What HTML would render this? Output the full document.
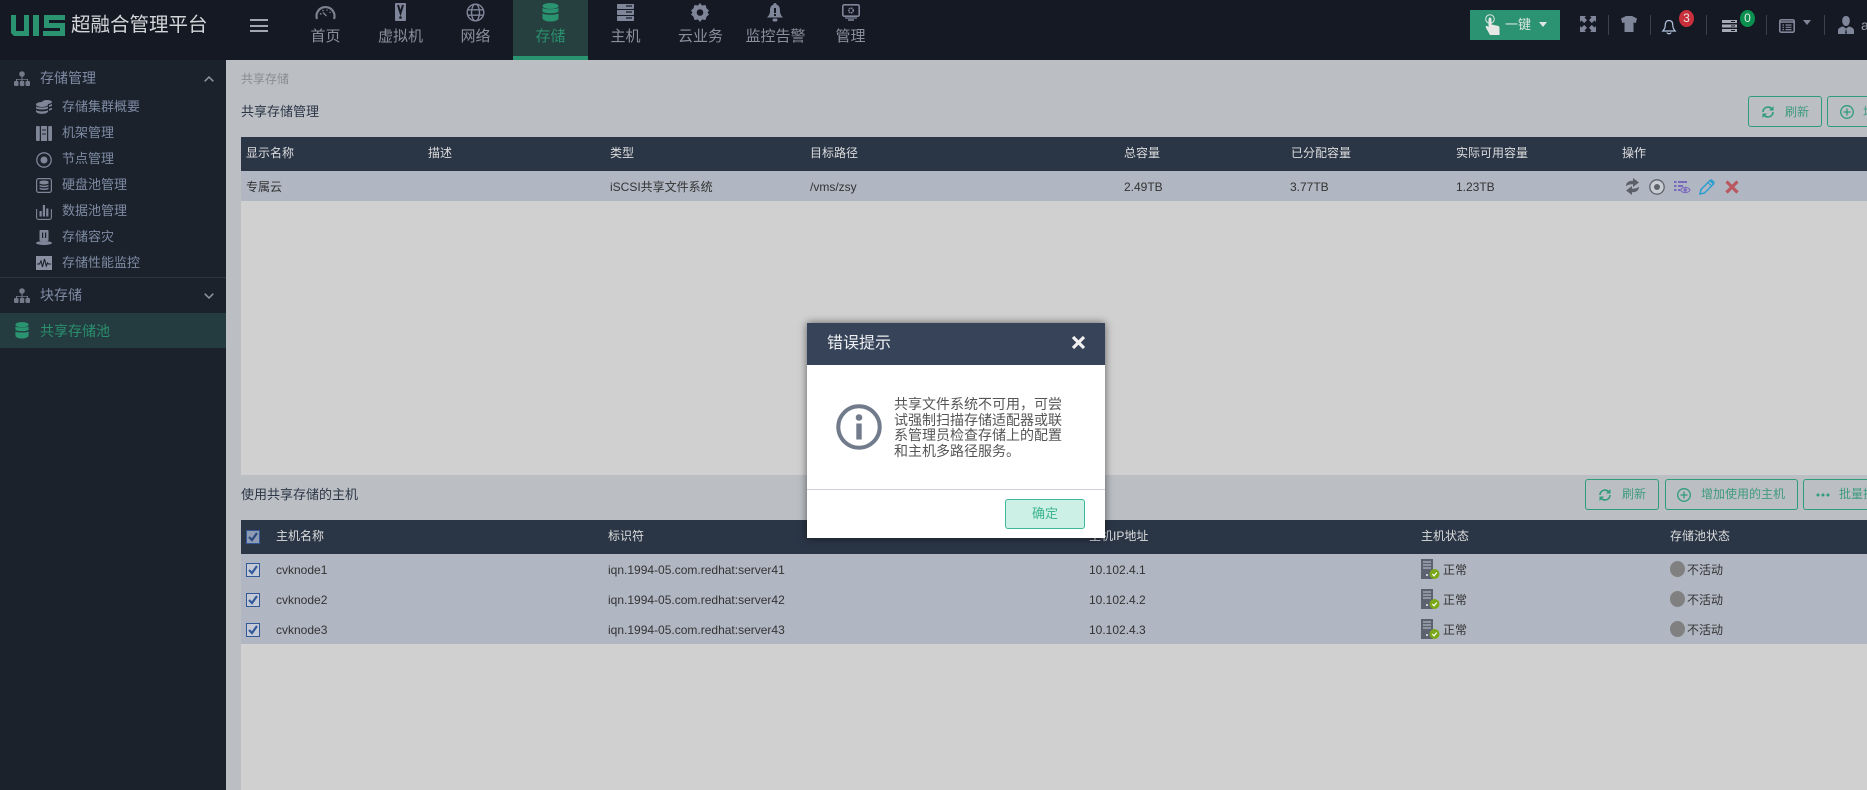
<!DOCTYPE html>
<html lang="zh">
<head>
<meta charset="utf-8">
<title>UIS 超融合管理平台</title>
<style>
html,body{margin:0;padding:0;width:1867px;height:790px;overflow:hidden;background:#bbbec3}
body{position:relative;font-family:"Liberation Sans","Noto Sans CJK SC",sans-serif;font-size:12px;color:#333}
.b{position:absolute}
.t{position:absolute;white-space:nowrap;height:20px;line-height:20px}
svg{position:absolute;overflow:visible}
.nav{position:absolute;top:27px;width:75px;height:20px;line-height:20px;text-align:center;font-size:15px;color:#8a8f9e;white-space:nowrap}
.sub{font-size:13px;color:#7e8ba3;left:62px}
.top{font-size:14px;color:#7e8ba3;left:40px}
.th{color:#ddd;font-size:12px}
.td{color:#333;font-size:12px}
.btn{position:absolute;box-sizing:border-box;border:1px solid #2f9c7a;border-radius:3px;height:31px}
.bt{font-size:12px;color:#3f9b7d}
.cb{position:absolute;box-sizing:border-box;width:14px;height:14px;border:1px solid #33589a;background:#c3cad6}
.sep{position:absolute;top:15px;width:1px;height:20px;background:#3c4049}
.badge{position:absolute;width:15px;height:17px;border-radius:50%;color:#e8e8e8;font-size:12px;line-height:17px;text-align:center}
</style>
</head>
<body>
<!-- header -->
<div class="b" style="left:0;top:0;width:1867px;height:60px;background:#151923"></div>

<!-- logo -->
<svg style="left:11px;top:15px" width="56" height="22" viewBox="0 0 56 22">
<path d="M0 0h5v16h8V0h5v21H3l-3-3z" fill="#2a9370"/>
<path d="M22 0h6v21h-6z" fill="#2a9370"/>
<path d="M33 0h21v5H38v3h16v13H32v-5h17v-3H33z" fill="#2a9370"/>
</svg>
<div class="t" style="left:71px;top:15px;font-size:19.500px;color:#d4d6da">超融合管理平台</div>

<!-- hamburger -->
<div class="b" style="left:250px;top:19px;width:18px;height:2px;background:#a2a6b3"></div>
<div class="b" style="left:250px;top:25px;width:18px;height:2px;background:#a2a6b3"></div>
<div class="b" style="left:250px;top:30px;width:18px;height:2px;background:#a2a6b3"></div>

<!-- active nav -->
<div class="b" style="left:513px;top:0;width:75px;height:56px;background:#25403f"></div>
<div class="b" style="left:513px;top:56px;width:75px;height:4px;background:#2a9370"></div>
<svg style="left:544px;top:60px" width="13" height="6"><path d="M0 0h13L6.500 6z" fill="#2a9370"/></svg>

<!-- nav icons -->
<svg style="left:315px;top:5px" width="21" height="15" viewBox="0 0 21 15"><path d="M2 14A9 9 0 1 1 19 14" fill="none" stroke="#7d8291" stroke-width="2.200"/><path d="M5 8.500l1.500 .8M7.500 5l1 1M12 4.500v1.200M15.500 7l-1 .8M8 7.500l3.500 3.500" stroke="#7d8291" stroke-width="1.300" fill="none"/></svg>
<svg style="left:395px;top:3px" width="11" height="18" viewBox="0 0 11 18"><rect width="11" height="18" rx="1" fill="#80869a"/><path d="M3 2l2.500 8L8 2" fill="none" stroke="#151923" stroke-width="2"/><circle cx="5.500" cy="14.500" r="1.300" fill="#151923"/></svg>
<svg style="left:466px;top:3px" width="19" height="19" viewBox="0 0 19 19" fill="none" stroke="#80869a" stroke-width="1.400"><circle cx="9.500" cy="9.500" r="8.300"/><ellipse cx="9.500" cy="9.500" rx="4" ry="8.300"/><path d="M1.500 6.800h16M1.500 12.200h16"/></svg>
<svg style="left:542px;top:3px" width="17" height="19" viewBox="0 0 17 19" fill="#2a9370"><ellipse cx="8.500" cy="3" rx="8" ry="3"/><path d="M.5 4.800C2 6.800 15 6.800 16.500 4.800V8.500C15 10.800 2 10.800 .5 8.500z"/><path d="M.5 10.300C2 12.300 15 12.300 16.500 10.300V15.500C15 19.500 2 19.500 .5 15.500z"/></svg>
<svg style="left:617px;top:4px" width="17" height="17" viewBox="0 0 17 17" fill="#80869a"><rect width="17" height="5" rx=".7"/><rect y="6" width="17" height="5" rx=".7"/><rect y="12" width="17" height="5" rx=".7"/><path d="M9 2h6M9 8h6M9 14h6" stroke="#151923" stroke-width="1.200"/></svg>
<svg style="left:691px;top:3px" width="18" height="19" viewBox="0 0 18 19"><path d="M9 0l2 2.500 3.500-.5 1 3.200L18 7.500 16.500 9.500 18 11.500l-2.500 2.300-1 3.200-3.500-.5L9 19l-2-2.500-3.500.5-1-3.200L0 11.500 1.500 9.500 0 7.500l2.500-2.300 1-3.200 3.500.5z" fill="#80869a"/><circle cx="9" cy="9.500" r="3.300" fill="#151923"/></svg>
<svg style="left:767px;top:3px" width="16" height="19" viewBox="0 0 16 19" fill="#80869a"><path d="M8 0c1 0 1.700.7 1.700 1.700C12.500 2.500 13 5 13 8c0 3 1.500 5 3 6.500H0C1.500 13 3 11 3 8c0-3 .5-5.500 3.300-6.300C6.300.7 7 0 8 0z"/><rect x="5.500" y="15.500" width="5" height="3" rx="1.500"/><rect x="7" y="5" width="2" height="5" fill="#151923"/><rect x="7" y="11" width="2" height="2" fill="#151923"/></svg>
<svg style="left:842px;top:4px" width="18" height="17" viewBox="0 0 18 17"><rect x=".8" y=".8" width="16.400" height="11.400" rx="1.500" fill="none" stroke="#80869a" stroke-width="1.600"/><path d="M3 14h12" stroke="#80869a" stroke-width="1.200"/><path d="M6 16h6" stroke="#80869a" stroke-width="1.500"/><circle cx="9" cy="6.500" r="2.300" fill="none" stroke="#80869a" stroke-width="1.600" stroke-dasharray="1.500 .6"/></svg>

<div class="nav" style="left:288px">首页</div>
<div class="nav" style="left:363px">虚拟机</div>
<div class="nav" style="left:438px">网络</div>
<div class="nav" style="left:513px;color:#2a8f6d">存储</div>
<div class="nav" style="left:588px">主机</div>
<div class="nav" style="left:663px">云业务</div>
<div class="nav" style="left:738px">监控告警</div>
<div class="nav" style="left:813px">管理</div>

<!-- header right -->
<div class="b" style="left:1470px;top:10px;width:90px;height:30px;background:#2b9371"></div>
<svg style="left:1485px;top:14px" width="15" height="21" viewBox="0 0 15 21"><circle cx="5" cy="5" r="4.300" fill="none" stroke="#dfe6e3" stroke-width="1"/><path d="M3.500 5c0-2 3-2 3 0v5.500l6 1.200c1.500.3 2 1 2 2.300V21H5L.8 13.500c-.5-1.300 1-2.300 2.200-1l.5.700z" fill="#e6e8e6"/></svg>
<div class="t" style="left:1505px;top:15px;font-size:13px;color:#dce6e2">一键</div>
<svg style="left:1539px;top:22px" width="8" height="5"><path d="M0 0h8L4 5z" fill="#dfe6e3"/></svg>

<svg style="left:1580px;top:16px" width="16" height="16" viewBox="0 0 16 16" fill="#80869a"><path d="M0 0h6L4.500 1.500 7 4.200 4.200 7 1.500 4.500 0 6z"/><path d="M16 0v6l-1.500-1.500L11.800 7 9 4.200l2.500-2.700L10 0z"/><path d="M0 16v-6l1.500 1.500L4.200 9 7 11.800l-2.500 2.700L6 16z"/><path d="M16 16h-6l1.500-1.500L9 11.800 11.800 9l2.700 2.500L16 10z"/></svg>
<div class="sep" style="left:1608px"></div>
<svg style="left:1621px;top:16px" width="16" height="16" viewBox="0 0 16 16"><path d="M5 0h6l5 2.500-1.200 4.500-2.300-.5V16h-9V6.500L1.200 7 0 2.500z" fill="#80869a"/></svg>
<div class="sep" style="left:1650px"></div>
<svg style="left:1662px;top:19px" width="14" height="16" viewBox="0 0 14 16"><path d="M7 1.500c3 0 3.800 2.400 3.800 5 0 2.500 1 4 2.400 5.500H.8C2.200 10.500 3.200 9 3.200 6.500c0-2.600.8-5 3.800-5z" fill="none" stroke="#b4c4df" stroke-width="1.200"/><path d="M5 13.500c.5 1.700 3.500 1.700 4 0" fill="none" stroke="#b4c4df" stroke-width="1.200"/></svg>
<div class="badge" style="left:1679px;top:10px;background:#c9303c">3</div>
<div class="sep" style="left:1706px"></div>
<svg style="left:1722px;top:20px" width="15" height="12" viewBox="0 0 15 12"><rect width="15" height="3" fill="#a6aab5"/><rect y="4.500" width="15" height="3" fill="#a6aab5"/><rect y="9" width="15" height="3" fill="#a6aab5"/><path d="M9 1.500h4M9 6h4M9 10.500h4" stroke="#151923" stroke-width="1"/></svg>
<div class="badge" style="left:1740px;top:10px;background:#0a8f4f">0</div>
<div class="sep" style="left:1766px"></div>
<svg style="left:1779px;top:19px" width="16" height="14" viewBox="0 0 16 14"><rect x=".8" y=".8" width="14.400" height="12.400" rx="1.500" fill="none" stroke="#80869a" stroke-width="1.600"/><path d="M.8 3h14.400" stroke="#80869a" stroke-width="1.600"/><path d="M3.500 6h1.500M6.500 6h6M3.500 8.300h1.500M6.500 8.300h6M3.500 10.600h1.500M6.500 10.600h6" stroke="#80869a" stroke-width="1.200"/></svg>
<svg style="left:1803px;top:20px" width="8" height="5"><path d="M0 0h8L4 5z" fill="#80869a"/></svg>
<div class="sep" style="left:1824px"></div>
<svg style="left:1838px;top:16px" width="16" height="18" viewBox="0 0 16 18" fill="#80869a"><path d="M8 0c2.800 0 3.800 2.300 3.800 5 0 2.500-1.500 5-3.800 5S4.200 7.500 4.200 5C4.200 2.300 5.200 0 8 0z"/><path d="M5 10.500l3 2 3-2c3 .7 5 2 5 4V18H0v-3.500c0-2 2-3.300 5-4z"/><path d="M8 12.500l-1 5h2z" fill="#151923"/></svg>
<div class="t" style="left:1861px;top:15px;font-size:14px;color:#9a9ea8">admin</div>

<!-- sidebar -->
<div class="b" style="left:0;top:60px;width:226px;height:730px;background:#1b222c"></div>
<div class="b" style="left:0;top:277px;width:226px;height:1px;background:#2e353f"></div>
<div class="b" style="left:0;top:313px;width:226px;height:35px;background:#243c3f"></div>

<svg style="left:14px;top:71px" width="16" height="15" viewBox="0 0 16 15" fill="#747a8a"><circle cx="8" cy="3" r="2.800"/><path d="M7.500 5h1v3H14v2h-1V8.800H8.500V10h-1V8.800H3V10H2V8h5.500z"/><rect y="10" width="4.500" height="5" rx="1"/><rect x="5.800" y="10" width="4.500" height="5" rx="1"/><rect x="11.500" y="10" width="4.500" height="5" rx="1"/></svg>
<div class="t top" style="top:68px">存储管理</div>
<svg style="left:204px;top:76px" width="10" height="6"><path d="M.7 5.300L5 1l4.300 4.300" fill="none" stroke="#8f96a5" stroke-width="1.500"/></svg>

<svg style="left:36px;top:100px" width="16" height="14" viewBox="0 0 16 14" fill="#7f8698"><ellipse cx="6" cy="4.500" rx="6" ry="2.500"/><path d="M0 6.200C2 8 10 8 12 6.200v2C10 10 2 10 0 8.200zM0 10c2 1.800 10 1.800 12 0v1.700C10 14.500 2 14.500 0 11.700z"/><ellipse cx="11" cy="2" rx="5" ry="2"/><path d="M13 5.300l3-1.300v1.800l-3 1.200zM13 9l3-1.300v1.800l-3 1.200z"/></svg>
<div class="t sub" style="top:97px">存储集群概要</div>
<svg style="left:36px;top:126px" width="16" height="15" viewBox="0 0 16 15" fill="#7f8698"><rect width="3.800" height="15" rx="1"/><rect x="5" width="6" height="15"/><rect x="12.200" width="3.800" height="15" rx="1"/><path d="M6 4h4M6 8h4" stroke="#1b222c" stroke-width="1"/></svg>
<div class="t sub" style="top:123px">机架管理</div>
<svg style="left:36px;top:152px" width="16" height="16" viewBox="0 0 16 16"><circle cx="8" cy="8" r="7.200" fill="none" stroke="#7f8698" stroke-width="1.300"/><circle cx="8" cy="8" r="3.500" fill="#7f8698"/></svg>
<div class="t sub" style="top:149px">节点管理</div>
<svg style="left:36px;top:178px" width="16" height="15" viewBox="0 0 16 15"><rect x=".6" y=".6" width="14.800" height="13.800" rx="2" fill="none" stroke="#7f8698" stroke-width="1.200"/><path d="M3.500 3.500c2-1.300 7-1.300 9 0v2c-2 1.300-7 1.300-9 0zM3.500 6.800c2 1.300 7 1.300 9 0v1.500c-2 1.300-7 1.300-9 0zM3.500 9.500c2 1.300 7 1.300 9 0V11c-2 1.300-7 1.300-9 0z" fill="#7f8698"/></svg>
<div class="t sub" style="top:175px">硬盘池管理</div>
<svg style="left:36px;top:204px" width="16" height="16" viewBox="0 0 16 16" fill="#7f8698"><path d="M.6 5v8.500c0 1 .9 1.900 1.900 1.900h11c1 0 1.900-.9 1.900-1.900V5" fill="none" stroke="#7f8698" stroke-width="1.100"/><rect x="3.500" y="7" width="2.200" height="5.500"/><rect x="6.800" y="1" width="2.200" height="11.500"/><rect x="10.200" y="4.500" width="2.200" height="8"/></svg>
<div class="t sub" style="top:201px">数据池管理</div>
<svg style="left:36px;top:230px" width="16" height="15" viewBox="0 0 16 15" fill="#7f8698"><rect x="3.500" y="0" width="9" height="11" rx="1"/><rect x="6" y="2.500" width="1.200" height="5.500" fill="#1b222c"/><rect x="9" y="2.500" width="1.200" height="5.500" fill="#1b222c"/><ellipse cx="8" cy="13" rx="8" ry="2"/></svg>
<div class="t sub" style="top:227px">存储容灾</div>
<svg style="left:36px;top:256px" width="16" height="14" viewBox="0 0 16 14"><rect width="16" height="14" fill="#8a90a1"/><path d="M1 8h2.500l1.500 -3 1.500 6 2-8 1.800 7 1.200 -3 1 1H15" fill="none" stroke="#1b222c" stroke-width="1.100"/></svg>
<div class="t sub" style="top:253px">存储性能监控</div>

<svg style="left:14px;top:288px" width="16" height="15" viewBox="0 0 16 15" fill="#747a8a"><circle cx="8" cy="3" r="2.800"/><path d="M7.500 5h1v3H14v2h-1V8.800H8.500V10h-1V8.800H3V10H2V8h5.500z"/><rect y="10" width="4.500" height="5" rx="1"/><rect x="5.800" y="10" width="4.500" height="5" rx="1"/><rect x="11.500" y="10" width="4.500" height="5" rx="1"/></svg>
<div class="t top" style="top:285px">块存储</div>
<svg style="left:204px;top:293px" width="10" height="6"><path d="M.7 .7L5 5l4.300-4.300" fill="none" stroke="#8f96a5" stroke-width="1.500"/></svg>

<svg style="left:15px;top:322px" width="14" height="17" viewBox="0 0 17 19" preserveAspectRatio="none" fill="#2a9370"><ellipse cx="8.500" cy="3" rx="8" ry="3"/><path d="M.5 4.800C2 6.800 15 6.800 16.500 4.800V8.500C15 10.800 2 10.800 .5 8.500z"/><path d="M.5 10.300C2 12.300 15 12.300 16.500 10.300V15.500C15 19.500 2 19.500 .5 15.500z"/></svg>
<div class="t top" style="top:321px;color:#2a8f6d">共享存储池</div>

<!-- content -->
<div class="b" style="left:226px;top:60px;width:1641px;height:730px;background:#bbbec3"></div>
<div class="b" style="left:241px;top:201px;width:1626px;height:274px;background:#d0d0d0"></div>
<div class="b" style="left:241px;top:644px;width:1626px;height:146px;background:#d0d0d0"></div>

<div class="t" style="left:241px;top:69px;font-size:12px;color:#8a8c90">共享存储</div>
<div class="t" style="left:241px;top:102px;font-size:13px;color:#2a3546">共享存储管理</div>

<div class="btn" style="left:1748px;top:96px;width:74px"></div>
<svg style="left:1761px;top:105px" width="14" height="14" viewBox="0 0 14 14" fill="none" stroke="#2f9c7a" stroke-width="1.600"><path d="M2 7a5 5 0 0 1 8.500-3.500M12 7a5 5 0 0 1-8.500 3.500"/><path d="M12.500 1v4.500H8zM1.500 13V8.500H6z" fill="#2f9c7a" stroke="none"/></svg>
<div class="t bt" style="left:1785px;top:102px">刷新</div>
<div class="btn" style="left:1827px;top:96px;width:60px"></div>
<svg style="left:1840px;top:105px" width="14" height="14" viewBox="0 0 14 14" fill="none" stroke="#2f9c7a" stroke-width="1.300"><circle cx="7" cy="7" r="6.300"/><path d="M7 3.500v7M3.500 7h7"/></svg>
<div class="t bt" style="left:1863px;top:102px">增加</div>

<!-- table 1 -->
<div class="b" style="left:241px;top:137px;width:1626px;height:34px;background:#2a3546"></div>
<div class="b" style="left:241px;top:171px;width:1626px;height:30px;background:#b0b6c2"></div>
<div class="t th" style="left:246px;top:143px">显示名称</div>
<div class="t th" style="left:428px;top:143px">描述</div>
<div class="t th" style="left:610px;top:143px">类型</div>
<div class="t th" style="left:810px;top:143px">目标路径</div>
<div class="t th" style="left:1124px;top:143px">总容量</div>
<div class="t th" style="left:1291px;top:143px">已分配容量</div>
<div class="t th" style="left:1456px;top:143px">实际可用容量</div>
<div class="t th" style="left:1622px;top:143px">操作</div>
<div class="t td" style="left:246px;top:177px">专属云</div>
<div class="t td" style="left:610px;top:177px">iSCSI共享文件系统</div>
<div class="t td" style="left:810px;top:177px">/vms/zsy</div>
<div class="t td" style="left:1124px;top:177px">2.49TB</div>
<div class="t td" style="left:1290px;top:177px">3.77TB</div>
<div class="t td" style="left:1456px;top:177px">1.23TB</div>

<svg style="left:1626px;top:178px" width="13" height="17" viewBox="0 0 13 17" fill="#5c6069"><path d="M0 8.500C0 4 3 2.800 7 2.800V0l6 4.500-6 4.500V6.300C4 6.300 1.500 6.800 0 8.500z"/><path d="M13 8.500c0 4.500-3 5.700-7 5.700V17L0 12.500 6 8v2.700c3 0 5.500-.5 7-2.200z"/></svg>
<svg style="left:1649px;top:179px" width="16" height="16" viewBox="0 0 16 16"><circle cx="8" cy="8" r="7.200" fill="#c9cdd3" stroke="#5e626b" stroke-width="1.300"/><circle cx="8" cy="8" r="3" fill="#5e626b"/></svg>
<svg style="left:1674px;top:180px" width="16" height="14" viewBox="0 0 16 14" fill="#7a68bd"><path d="M0 1h2.500v2H0zM0 5h2.500v2H0zM0 9h2.500v2H0zM4 1h9v2H4zM4 5h5v2H4zM4 9h2v2H4z"/><path d="M6.500 10c2-3.500 7.500-3.500 9.500 0-2 3.500-7.500 3.500-9.500 0z" fill="none" stroke="#7a68bd" stroke-width="1.100"/><circle cx="11.200" cy="10" r="1.700"/></svg>
<svg style="left:1699px;top:179px" width="16" height="16" viewBox="0 0 16 16"><path d="M1 15l1-4.500L11 1.500l3.500 3.500L5.500 14z" fill="none" stroke="#2b9ed0" stroke-width="1.500"/><path d="M11 1.500L12.500 0 16 3.500 14.500 5z" fill="#2b9ed0"/><path d="M9 3.500l3.500 3.500" stroke="#2b9ed0" stroke-width="1.200"/></svg>
<svg style="left:1725px;top:180px" width="14" height="14" viewBox="0 0 14 14"><path d="M1.500 1.500l11 11M12.500 1.500l-11 11" stroke="#b9585e" stroke-width="3.200"/></svg>

<div class="t" style="left:241px;top:485px;font-size:13px;color:#2a3546">使用共享存储的主机</div>

<div class="btn" style="left:1585px;top:479px;width:74px"></div>
<svg style="left:1598px;top:488px" width="14" height="14" viewBox="0 0 14 14" fill="none" stroke="#2f9c7a" stroke-width="1.600"><path d="M2 7a5 5 0 0 1 8.500-3.500M12 7a5 5 0 0 1-8.500 3.500"/><path d="M12.500 1v4.500H8zM1.500 13V8.500H6z" fill="#2f9c7a" stroke="none"/></svg>
<div class="t bt" style="left:1622px;top:484px">刷新</div>
<div class="btn" style="left:1665px;top:479px;width:133px"></div>
<svg style="left:1677px;top:488px" width="14" height="14" viewBox="0 0 14 14" fill="none" stroke="#2f9c7a" stroke-width="1.300"><circle cx="7" cy="7" r="6.300"/><path d="M7 3.500v7M3.500 7h7"/></svg>
<div class="t bt" style="left:1701px;top:484px">增加使用的主机</div>
<div class="btn" style="left:1803px;top:479px;width:90px"></div>
<svg style="left:1816px;top:493px" width="14" height="4" fill="#2f9c7a"><circle cx="2" cy="2" r="1.500"/><circle cx="7" cy="2" r="1.500"/><circle cx="12" cy="2" r="1.500"/></svg>
<div class="t bt" style="left:1839px;top:484px">批量操作</div>

<!-- table 2 -->
<div class="b" style="left:241px;top:520px;width:1626px;height:34px;background:#2a3546"></div>
<div class="b" style="left:241px;top:554px;width:1626px;height:90px;background:#b0b6c2"></div>
<div class="cb" style="left:246px;top:530px;background:#8e9bb3"></div>
<svg style="left:248px;top:532px" width="10" height="10"><path d="M1 5l3 3 5-7" fill="none" stroke="#2c4a80" stroke-width="2.200"/></svg>
<div class="t th" style="left:276px;top:526px">主机名称</div>
<div class="t th" style="left:608px;top:526px">标识符</div>
<div class="t th" style="left:1089px;top:526px">主机IP地址</div>
<div class="t th" style="left:1421px;top:526px">主机状态</div>
<div class="t th" style="left:1670px;top:526px">存储池状态</div>

<div class="cb" style="left:246px;top:563px"></div>
<svg style="left:248px;top:565px" width="10" height="10"><path d="M1 5l3 3 5-7" fill="none" stroke="#33589a" stroke-width="2.200"/></svg>
<div class="t td" style="left:276px;top:560px">cvknode1</div>
<div class="t td" style="left:608px;top:560px">iqn.1994-05.com.redhat:server41</div>
<div class="t td" style="left:1089px;top:560px">10.102.4.1</div>
<svg style="left:1421px;top:559px" width="19" height="20" viewBox="0 0 19 20"><rect width="12" height="20" fill="#5c6270"/><path d="M2 3h8M2 6h8M2 9h8" stroke="#aeb4bf" stroke-width="1.300"/><rect x="5" y="15" width="2" height="2" fill="#c8ccd4"/><circle cx="13.500" cy="15" r="5" fill="#7aa818"/><path d="M11.300 15l1.700 1.800 2.800-3.300" fill="none" stroke="#fff" stroke-width="1.200"/></svg>
<div class="t td" style="left:1443px;top:560px">正常</div>
<div class="b" style="left:1670px;top:561px;width:15px;height:16px;border-radius:50%;background:#808080"></div>
<div class="t td" style="left:1687px;top:560px">不活动</div>

<div class="cb" style="left:246px;top:593px"></div>
<svg style="left:248px;top:595px" width="10" height="10"><path d="M1 5l3 3 5-7" fill="none" stroke="#33589a" stroke-width="2.200"/></svg>
<div class="t td" style="left:276px;top:590px">cvknode2</div>
<div class="t td" style="left:608px;top:590px">iqn.1994-05.com.redhat:server42</div>
<div class="t td" style="left:1089px;top:590px">10.102.4.2</div>
<svg style="left:1421px;top:589px" width="19" height="20" viewBox="0 0 19 20"><rect width="12" height="20" fill="#5c6270"/><path d="M2 3h8M2 6h8M2 9h8" stroke="#aeb4bf" stroke-width="1.300"/><rect x="5" y="15" width="2" height="2" fill="#c8ccd4"/><circle cx="13.500" cy="15" r="5" fill="#7aa818"/><path d="M11.300 15l1.700 1.800 2.800-3.300" fill="none" stroke="#fff" stroke-width="1.200"/></svg>
<div class="t td" style="left:1443px;top:590px">正常</div>
<div class="b" style="left:1670px;top:591px;width:15px;height:16px;border-radius:50%;background:#808080"></div>
<div class="t td" style="left:1687px;top:590px">不活动</div>

<div class="cb" style="left:246px;top:623px"></div>
<svg style="left:248px;top:625px" width="10" height="10"><path d="M1 5l3 3 5-7" fill="none" stroke="#33589a" stroke-width="2.200"/></svg>
<div class="t td" style="left:276px;top:620px">cvknode3</div>
<div class="t td" style="left:608px;top:620px">iqn.1994-05.com.redhat:server43</div>
<div class="t td" style="left:1089px;top:620px">10.102.4.3</div>
<svg style="left:1421px;top:619px" width="19" height="20" viewBox="0 0 19 20"><rect width="12" height="20" fill="#5c6270"/><path d="M2 3h8M2 6h8M2 9h8" stroke="#aeb4bf" stroke-width="1.300"/><rect x="5" y="15" width="2" height="2" fill="#c8ccd4"/><circle cx="13.500" cy="15" r="5" fill="#7aa818"/><path d="M11.300 15l1.700 1.800 2.800-3.300" fill="none" stroke="#fff" stroke-width="1.200"/></svg>
<div class="t td" style="left:1443px;top:620px">正常</div>
<div class="b" style="left:1670px;top:621px;width:15px;height:16px;border-radius:50%;background:#808080"></div>
<div class="t td" style="left:1687px;top:620px">不活动</div>

<!-- modal -->
<div class="b" style="left:807px;top:323px;width:298px;height:215px;background:#fff;box-shadow:0 0 8px rgba(0,0,0,.55)"></div>
<div class="b" style="left:807px;top:323px;width:298px;height:42px;background:#364359"></div>
<div class="t" style="left:827px;top:334px;font-size:16px;color:#eef0f3">错误提示</div>
<svg style="left:1071px;top:335px" width="15" height="15" viewBox="0 0 15 15"><path d="M2 2l11 11M13 2L2 13" stroke="#f0f0f0" stroke-width="3.200"/></svg>
<svg style="left:836px;top:404px" width="46" height="46" viewBox="0 0 46 46"><circle cx="23" cy="23" r="20.700" fill="none" stroke="#717b8b" stroke-width="4"/><circle cx="23" cy="13.500" r="3.300" fill="#717b8b"/><rect x="20.300" y="19.500" width="5.400" height="16" fill="#717b8b"/></svg>
<div class="b" style="left:894px;top:397px;width:170px;font-size:14px;line-height:15.500px;color:#555;white-space:nowrap">共享文件系统不可用，可尝<br>试强制扫描存储适配器或联<br>系管理员检查存储上的配置<br>和主机多路径服务。</div>
<div class="b" style="left:807px;top:489px;width:298px;height:1px;background:#cfd0d8"></div>
<div class="b" style="left:1005px;top:499px;width:80px;height:30px;box-sizing:border-box;background:#cdf0e6;border:1px solid #3cb896;border-radius:3px;text-align:center;line-height:28px;font-size:13px;color:#3cb48e">确定</div>
</body>
</html>
